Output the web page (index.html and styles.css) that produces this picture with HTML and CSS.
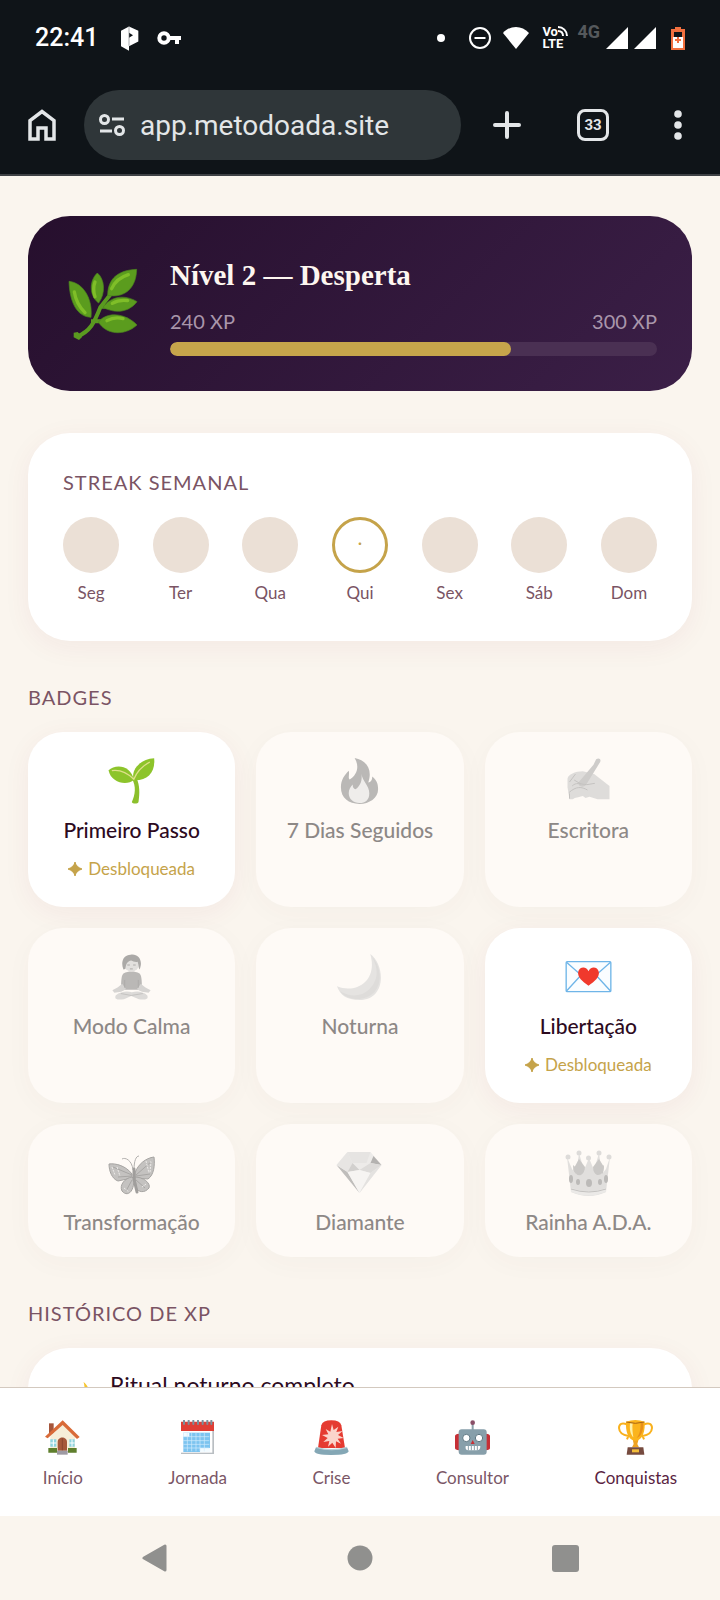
FILE: index.html
```html
<!DOCTYPE html>
<html lang="pt-BR">

<head>
    <meta charset="UTF-8">
    <meta name="viewport" content="width=device-width, initial-scale=1.0">
    <title>Conquistas</title>
    <link rel="stylesheet" href="styles.css">
</head>

<body>
    <!-- Status bar -->
    <div class="status-bar">
        <span class="clock">22:41</span>
        <svg class="status-app" width="18" height="25" viewBox="0 0 54 74">
            <path d="M0 14 24 1l28 13v32L24 60v14L0 60z" fill="#fff" />
            <path d="M24 20l12 7-12 8z" fill="#0f1418" />
            <path d="M24 1v58" stroke="#7d8184" stroke-width="2" />
        </svg>
        <svg width="24" height="14" viewBox="0 0 24 14">
            <circle cx="7" cy="7" r="4.7" fill="none" stroke="#fff" stroke-width="4" />
            <path d="M12 5h12v4h-2v4h-4V9h-6z" fill="#fff" />
        </svg>
        <div class="status-right">
            <span class="status-dot"></span>
            <svg width="24" height="24" viewBox="0 0 24 24" fill="none" stroke="#fff" stroke-width="2">
                <circle cx="12" cy="12" r="10" />
                <path d="M6.500 12h11" />
            </svg>
            <svg width="26" height="22" viewBox="0 0 26 22">
                <path d="M13 22 0 6C7-2 19-2 26 6z" fill="#fff" />
            </svg>
            <span class="volte">
                <span>Vo<svg width="10" height="10" viewBox="0 0 10 10" fill="none" stroke="#fff" stroke-width="2"><path d="M0 1c5 0 9 4 9 9M0 5c3 0 5 2 5 5" /></svg></span>
                <span>LTE</span>
            </span>
            <span class="net">4G</span>
            <svg class="signal" width="22" height="22" viewBox="0 0 22 22"><path d="M22 0v22H0z" fill="#fff" /></svg>
            <svg class="signal" width="22" height="22" viewBox="0 0 22 22"><path d="M22 0v22H0z" fill="#fff" /></svg>
            <svg class="battery" width="14" height="23" viewBox="0 0 14 23">
                <path d="M0 2h4V0h6v2h4v21H0z" fill="#f2703f" />
                <path d="M3 5h8v5H3z" fill="#101519" />
                <path d="M2 10h10v11H2z" fill="#fff" />
                <path d="M7 10v6M4 13h6" stroke="#f2703f" stroke-width="2" />
            </svg>
        </div>
    </div>

    <!-- Browser toolbar -->
    <header class="toolbar">
        <button type="button" class="home-btn" aria-label="Página inicial">
            <svg width="28" height="32" viewBox="0 0 28 32" fill="none" stroke="#e3e6e8" stroke-width="3.500">
                <path d="M2 30V11.500L14 2.500l12 9V30h-8V19h-8v11z" />
            </svg>
        </button>
        <div class="address">
            <svg width="26" height="22" viewBox="0 0 26 22" fill="none" stroke="#e3e6e8" stroke-width="3">
                <circle cx="5.500" cy="5.500" r="4" />
                <circle cx="20.500" cy="16.500" r="4" />
                <path d="M13 5h12M1 17h12" />
            </svg>
            <input type="text" class="address-input" value="app.metodoada.site" aria-label="Endereço do site">
        </div>
        <button type="button" class="tool-btn" aria-label="Nova guia">
            <svg width="28" height="28" viewBox="0 0 28 28" stroke="#e3e6e8" stroke-width="4" stroke-linecap="round">
                <path d="M14 2v24M2 14h24" />
            </svg>
        </button>
        <button type="button" class="tool-btn" aria-label="33 guias abertas"><span class="tabs">33</span></button>
        <button type="button" class="menu-btn" aria-label="Menu">
            <svg width="8" height="30" viewBox="0 0 8 30" fill="#e3e6e8">
                <circle cx="4" cy="4" r="3.800" />
                <circle cx="4" cy="15" r="3.800" />
                <circle cx="4" cy="26" r="3.800" />
            </svg>
        </button>
    </header>

    <main class="content">
        <section class="level-card">
            <div class="level-icon">
                <svg width="70" height="72" viewBox="0 0 208 216">
                    <path d="M26 206C66 190 78 164 96 118L134 70M68 160h40M98 116h26" fill="none" stroke="#5a9a20" stroke-width="12" />
                    <path d="M16 194l12-2 14 14-10 10-16-8z" fill="#5a9a20" />
                    <g fill="#5b9c1e" stroke="#4c8420" stroke-width="2">
                        <path d="M2 40C44 44 74 92 68 148 26 146 4 104 2 40z" />
                        <path d="M87 15c22 18 26 60 4 90-28-20-30-66-4-90z" />
                        <path d="M205 4c-1 52-32 88-87 78C118 32 150 6 205 4z" />
                        <path d="M104 118c26-36 68-38 102-17-28 36-70 34-102 17z" />
                        <path d="M90 162c26-32 80-28 116 9-38 34-92 30-116-9z" />
                    </g>
                    <g fill="none" stroke="#7fbe28" stroke-width="10" stroke-linecap="round">
                        <path d="M18 72c4 26 14 44 32 62" />
                        <path d="M80 42c-6 16-4 32 0 44" />
                        <path d="M180 20c-26 8-42 24-50 42" />
                        <path d="M132 106c14-8 30-10 46-8" />
                        <path d="M116 158c18-10 32-10 48-6" />
                    </g>
                </svg>
            </div>
            <div class="level-info">
                <h1 class="level-title">Nível 2 — Desperta</h1>
                <div class="level-xp"><span>240 XP</span><span>300 XP</span></div>
                <div class="bar">
                    <div class="bar-fill" style="width: 70%"></div>
                </div>
            </div>
        </section>

        <section class="streak-card">
            <h2 class="section-title">Streak semanal</h2>
            <div class="week">
                <div class="day"><span class="day-dot"></span>Seg</div>
                <div class="day"><span class="day-dot"></span>Ter</div>
                <div class="day"><span class="day-dot"></span>Qua</div>
                <div class="day"><span class="day-dot today">·</span>Qui</div>
                <div class="day"><span class="day-dot"></span>Sex</div>
                <div class="day"><span class="day-dot"></span>Sáb</div>
                <div class="day"><span class="day-dot"></span>Dom</div>
            </div>
        </section>

        <h2 class="section-title">Badges</h2>
        <div class="badges">
            <article class="badge">
                <svg class="badge-icon" viewBox="0 0 138 138">
                    <path d="M70 62c14 22 10 48 0 70 2 6 18 6 20 0 4-26 4-50-6-72z" fill="#8cc02c" />
                    <path d="M0 37C22 16 68 22 76 66 56 84 8 76 0 37z" fill="#8dc42b" />
                    <path d="M137 1c4 42-20 68-61 66C66 38 92 4 137 1z" fill="#8dc42b" />
                    <path d="M10 38c28-4 48 8 66 26C86 38 102 24 124 12" fill="none" stroke="#dfe08a" stroke-width="4" />
                </svg>
                <h3 class="badge-name">Primeiro Passo</h3>
                <p class="badge-tag"><svg width="14" height="14" viewBox="0 0 14 14"><path d="M7 0Q8 5 14 7 8 9 7 14 6 9 0 7 6 5 7 0z" fill="#c5a34a" stroke="#c5a34a" /></svg> Desbloqueada</p>
            </article>
            <article class="badge locked">
                <svg class="badge-icon" viewBox="0 0 46 47">
                    <path d="M18 0c14 3 18 13 14 25 3 0 4-3 4-6 5 4 6 8 6 13 0 9-9 15-19 15C12 47 4 41 4 30c0-8 4-13 8-17 1 4-1 7 1 9 8-5 10-14 5-22z" fill="#e8601c" />
                    <path d="M25 16c1 8 8 12 8 20 0 7-4 10-10 10S12 42 12 36c0-4 2-7 4-9 0 3 1 4 3 5 5-4 7-9 6-16z" fill="#ffe28c" />
                </svg>
                <h3 class="badge-name">7 Dias Seguidos</h3>
            </article>
            <article class="badge locked">
                <svg class="badge-icon" viewBox="0 0 138 138">
                    <path d="M6 62C8 50 28 40 52 40l34 8 46 36 0 40-36 0-24-8-12 4-8-6-14 4-10 2-6 4-10 0-6-36z" fill="#d6bda0" />
                    <path d="M92 4c8-6 16 0 12 8L62 80c-10 12-28 4-22-8L84 20z" fill="#a0a0a0" />
                    <path d="M26 66l20 12M20 84c12-12 22-6 44-4l24-4M10 104c22-20 38-18 56-8M30 48l-18 24M12 106v16" fill="none" stroke="#9c8a75" stroke-width="3" />
                </svg>
                <h3 class="badge-name">Escritora</h3>
            </article>

            <article class="badge locked">
                <svg class="badge-icon" viewBox="0 0 138 142">
                    <path d="M44 60c16-8 34-8 50 0 8 8 6 28 8 50H36c2-22 0-42 8-50z" fill="#787878" />
                    <path d="M40 92c-10 10-18 14-30 20l6 8c16-2 28-4 36-12zM98 92c10 10 18 14 30 20l-6 8c-16-2-28-4-36-12z" fill="#c8ac90" />
                    <path d="M20 128c16-14 38-14 50-10 14-4 34-4 48 10 4 12-6 14-26 12l-24-10-22 10c-22 2-30 0-26-12z" fill="#c9b9aa" />
                    <path d="M36 122l32 6 36-6" fill="none" stroke="#8a8a8a" stroke-width="3" />
                    <circle cx="69" cy="30" r="24" fill="#e3c4a4" />
                    <path d="M44 48C34 22 46 2 66 2c24-4 40 18 28 46-4-4-2-14-6-24-8 2-14-2-20-4-10 2-16 8-18 26z" fill="#5a5a5a" />
                    <path d="M56 34h8M74 34h8M64 46h9" stroke="#67574b" stroke-width="3" />
                    <path d="M48 80l0 24M90 80l0 24" stroke="#5f5f5f" stroke-width="3" />
                </svg>
                <h3 class="badge-name">Modo Calma</h3>
            </article>
            <article class="badge locked">
                <svg class="badge-icon" viewBox="0 0 46 47">
                    <path d="M34 0c16 12 16 47-11 47C10 47 3 42 0 33c20 8 42-6 34-33z" fill="#d2ccc4" />
                    <path d="M36 3c13 15 10 41-13 43-10 0-16-3-20-8 10 6 22 6 30-2 9-9 10-20 3-33z" fill="#c4beb8" />
                </svg>
                <h3 class="badge-name">Noturna</h3>
            </article>
            <article class="badge">
                <svg class="badge-icon" viewBox="0 0 138 138">
                    <rect x="2" y="23" width="134" height="90" rx="3" fill="#fafdff" stroke="#6fb5e8" stroke-width="4" />
                    <path d="M3 25l66 58 66-58M3 111l44-48M135 111 91 63" fill="none" stroke="#6fb5e8" stroke-width="4" />
                    <path d="M69 95C50 82 36 70 38 54c4-18 26-17 31-2 5-15 27-16 31 2 2 16-12 28-31 41z" fill="#f0392c" />
                </svg>
                <h3 class="badge-name">Libertação</h3>
                <p class="badge-tag"><svg width="14" height="14" viewBox="0 0 14 14"><path d="M7 0Q8 5 14 7 8 9 7 14 6 9 0 7 6 5 7 0z" fill="#c5a34a" stroke="#c5a34a" /></svg> Desbloqueada</p>
            </article>

            <article class="badge locked">
                <svg class="badge-icon" viewBox="0 0 47 46">
                    <path d="M25 20C24 10 17 7 14 9M26 20c0-9 2-14 5-14" fill="none" stroke="#666" />
                    <g fill="#8c8c8c" stroke="#4d4d4d" stroke-width="1">
                        <path d="M24 24C18 16 8 13 1 14c0 7 3 15 9 17l14-3z" />
                        <path d="M27 23C30 14 38 8 46 7c1 8 0 18-6 22l-13-1z" />
                        <path d="M24 27c-7 1-13 8-10 14 5 6 12 2 12-12z" />
                        <path d="M27 27c8 0 16 6 14 11-4 5-11 5-13-1z" />
                    </g>
                    <path d="M24 25 5 17M24 26l-14 1M28 25 44 11M28 26l14-2M24 30l-6 11M28 30l9 8" stroke="#555" />
                    <path d="M4 17l3 8M9 17l3 9M38 11l3 12M43 11l-1 12M16 38l5 4M34 37l4-3" stroke="#ddd" stroke-dasharray="2 1" />
                    <path d="M26 19v10l3 13" fill="none" stroke="#444" stroke-width="3" stroke-linecap="round" />
                </svg>
                <h3 class="badge-name">Transformação</h3>
            </article>
            <article class="badge locked">
                <svg class="badge-icon" viewBox="0 0 46 46">
                    <path d="M11 2h23l11 13-22 28L0 15z" fill="#dedede" />
                    <path d="M11 2h23l-4 11-14 0z" fill="#cfcfcf" />
                    <path d="M0 15l11 7 12 21z" fill="#828282" />
                    <path d="M0 15 11 2l5 11-5 9z" fill="#d2d2d2" />
                    <path d="M16 13l7 7-12 2z" fill="#a8a8a8" />
                    <path d="M37 6l8 9-11-2z" fill="#6c6c6c" />
                    <path d="M23 20l11-7 11 2-11 8z" fill="#bdbdbd" />
                    <path d="M11 22l12-2 11 3-11 20z" fill="#f0f0f0" />
                    <path d="M34 23l11-8-22 28z" fill="#cbcbcb" />
                </svg>
                <h3 class="badge-name">Diamante</h3>
            </article>
            <article class="badge locked">
                <svg class="badge-icon" viewBox="0 0 47 46">
                    <path d="M8 15l8 7 7-7 8 7 8-7-2 20-14 4-14-4z" fill="#9a9a9a" />
                    <path d="M2 7l5 12 4 5 3-21 5 17 5-12 5 12 5-17 3 21 4-5 4-12-4 35q-17 8-35 0z" fill="#c6c6c6" />
                    <path d="M9 18q2 9 7 7 4-3 4-8l-6-8zM28 17q0 6 4 8 6 1 7-8l-5-8z" fill="#989898" />
                    <g fill="#bdbdbd">
                        <circle cx="3" cy="7" r="2.500" />
                        <circle cx="14" cy="3" r="2.500" />
                        <circle cx="23.500" cy="8" r="2.500" />
                        <circle cx="34" cy="3" r="2.500" />
                        <circle cx="44" cy="7" r="2.500" />
                    </g>
                    <g fill="#7c7c7c">
                        <ellipse cx="6" cy="29" rx="2" ry="4" />
                        <ellipse cx="13" cy="32" rx="2" ry="3" />
                        <ellipse cx="24" cy="33" rx="3" ry="4" />
                        <ellipse cx="35" cy="32" rx="2" ry="3" />
                        <ellipse cx="41" cy="29" rx="2" ry="4" />
                    </g>
                    <path d="M6 38q18 7 35 0v4q-18 7-35 0z" fill="#dadada" />
                    <path d="M6 39q18 6 35 0" fill="none" stroke="#8c8c8c" />
                </svg>
                <h3 class="badge-name">Rainha A.D.A.</h3>
            </article>
        </div>

        <h2 class="section-title">Histórico de XP</h2>
        <section class="history">
            <div class="history-row">
                <svg class="history-icon" viewBox="0 0 46 47">
                    <path d="M34 0c16 12 16 47-11 47C10 47 3 42 0 33c20 8 42-6 34-33z" fill="#f7c52d" />
                </svg>
                <span>Ritual noturno completo</span>
            </div>
        </section>
    </main>

    <nav class="bottom-nav">
        <a href="#inicio" class="nav-link">
            <svg class="nav-icon" viewBox="0 0 105 105">
                <path d="M12 10h14v30H12z" fill="#a5553a" />
                <path d="M16 48 54 12l36 38v46H16z" fill="#f6eed8" />
                <path d="M0 50 53 1l51 50-8 6-43-42L8 55z" fill="#d96b38" />
                <path d="M16 58h18v22H16zM73 58h16v22H73z" fill="#8fd4de" />
                <path d="M25 58v22M81 58v22M16 69h18M73 69h16" stroke="#fff" stroke-width="3" />
                <path d="M38 92V66c0-18 28-18 28 0v26z" fill="#a6583a" />
                <path d="M52 55v37" stroke="#7c3d28" stroke-width="2" />
                <path d="M10 84h26v14H10zM69 84h26v14H69z" fill="#5f7f2d" />
                <path d="M36 92h32v12H36z" fill="#9e9aa3" />
            </svg>
            Início
        </a>
        <a href="#jornada" class="nav-link">
            <svg class="nav-icon" viewBox="0 0 105 105">
                <path d="M3 12h99v90H3z" fill="#b9bec2" />
                <path d="M3 12h94v86H3z" fill="#fff" />
                <path d="M3 5h99v28H3z" fill="#df3e35" />
                <path d="M10 38h80v58H10z" fill="#7cc4f0" />
                <path d="M10 38h18v12H10zM60 84h30v12H60z" fill="#f3fbff" />
                <path d="M22 38v56M35 38v56M48 38v56M60 38v56M73 38v56M10 50h78M10 62h78M10 73h78M10 84h78" stroke="#d3edfd" stroke-width="2" />
                <path d="M12 2v10M26 2v10M40 2v10M54 2v10M68 2v10M82 2v10M94 2v10" stroke="#79909b" stroke-width="6" stroke-linecap="round" />
            </svg>
            Jornada
        </a>
        <a href="#crise" class="nav-link">
            <svg class="nav-icon" viewBox="0 0 105 105">
                <path d="M12 84 22 16Q26 1 52 1t30 15l11 68z" fill="#e53b31" />
                <path d="M54 12l5 18 14-10-6 16 19-3-14 12 17 9-18 2 10 15-15-7-1 20-10-16-13 12 4-17-18 3 13-12-17-9 19-2-8-16 14 8z" fill="#fbd4cb" />
                <path d="M6 82q46 16 93 0l5 12q-2 11-52 11T1 94z" fill="#84a7b5" />
                <path d="M7 82q46 14 92 0" fill="none" stroke="#b9d0d8" stroke-width="4" />
            </svg>
            Crise
        </a>
        <a href="#consultor" class="nav-link">
            <svg class="nav-icon" viewBox="0 0 105 105">
                <path d="M53 10v20" stroke="#8ba0a9" stroke-width="6" />
                <circle cx="53" cy="8" r="7" fill="#8a4f67" />
                <path d="M0 48q0-6 12-7v50Q0 90 0 84zM105 48q0-6-12-7v50q12-1 12-7z" fill="#c62f36" />
                <rect x="11" y="28" width="84" height="76" rx="9" fill="#879faa" />
                <g fill="#fff" stroke="#5f7883" stroke-width="3">
                    <circle cx="34" cy="54" r="11" />
                    <circle cx="72" cy="54" r="11" />
                </g>
                <path d="M53 60l6 12H47z" fill="#c62f36" />
                <path d="M32 78h44q0 13-10 13H40q-10 0-8-13z" fill="#fff" />
                <path d="M40 77v14M49 77v14M58 77v14M67 77v14" stroke="#879faa" stroke-width="3" />
            </svg>
            Consultor
        </a>
        <a href="#conquistas" class="nav-link active" aria-current="page">
            <svg class="nav-icon" viewBox="0 0 105 105">
                <path d="M28 14C12 6 3 12 3 24c1 16 16 22 28 24l-4 10M77 14c16-8 25-2 25 10-1 16-16 22-28 24l4 10" fill="none" stroke="#f9b11c" stroke-width="6" />
                <path d="M44 58h18l-4 14 5 10H42l5-10z" fill="#eea221" />
                <path d="M24 5q28-10 56 0c2 36-10 57-28 57S22 40 24 5z" fill="#fbb41d" />
                <path d="M36 10c-2 20 2 34 10 42-2-14-4-28-2-42z" fill="#fff0a8" />
                <path d="M68 8c0 22-4 36-12 46 16-6 21-28 20-46z" fill="#e8901b" />
                <path d="M25 6q27 8 54 0" fill="none" stroke="#a86416" stroke-width="3" />
                <path d="M29 82h47l3 22H26z" fill="#764b3f" />
                <path d="M42 88h21v9H42z" fill="#f3bd3a" />
            </svg>
            Conquistas
        </a>
    </nav>

    <!-- System navigation -->
    <div class="system-nav">
        <button type="button" class="system-btn" aria-label="Voltar">
            <svg width="26" height="28" viewBox="0 0 26 28"><path d="M2 14 23 2v24z" fill="#90908e" stroke="#90908e" stroke-width="3" stroke-linejoin="round" /></svg>
        </button>
        <button type="button" class="system-btn" aria-label="Início do sistema">
            <svg width="26" height="26" viewBox="0 0 26 26"><circle cx="13" cy="13" r="12.500" fill="#90908e" /></svg>
        </button>
        <button type="button" class="system-btn" aria-label="Recentes">
            <svg width="27" height="27" viewBox="0 0 27 27"><rect width="27" height="27" rx="3" fill="#90908e" /></svg>
        </button>
    </div>
</body>

</html>
```

FILE: styles.css
```css
* {
    margin: 0;
    padding: 0;
    box-sizing: border-box;
}

body {
    height: 100vh;
    display: flex;
    flex-direction: column;
    overflow: hidden;
    font-family: 'Lato', sans-serif;
    background: #faf5ee;
    color: #2d0a1e;
}

svg {
    display: block;
    flex-shrink: 0;
}

button {
    border: none;
    background: none;
    cursor: pointer;
}

/* Status bar */
.status-bar {
    height: 76px;
    flex-shrink: 0;
    display: flex;
    align-items: center;
    padding: 0 35px;
    background: #0f1418;
    color: #fff;
    font-family: 'Roboto', sans-serif;
}

.clock {
    font-size: 25px;
    font-weight: 500;
    line-height: 32px;
}

.status-app {
    margin: 0 18px 0 23px;
}

.status-right {
    margin-left: auto;
    display: flex;
    align-items: center;
}

.status-dot {
    width: 8px;
    height: 8px;
    margin-right: 23px;
    border-radius: 50%;
    background: #fff;
}

.status-right svg + svg {
    margin-left: 11px;
}

.volte {
    width: 27px;
    margin: 0 8px 0 13px;
    font-size: 13px;
    font-weight: 700;
    line-height: 12px;
}

.volte span {
    display: flex;
}

.net {
    height: 28px;
    margin-right: 6px;
    font-size: 18px;
    font-weight: 700;
    line-height: 16px;
    color: #55595c;
}

.status-right .signal + .signal {
    margin-left: 6px;
}

.status-right .battery {
    margin-left: 15px;
}

/* Browser toolbar */
.toolbar {
    height: 100px;
    flex-shrink: 0;
    display: flex;
    align-items: center;
    border-bottom: 2px solid #3e4145;
    background: #0f1418;
}

.home-btn {
    padding: 0 28px;
}

.address {
    flex: 1;
    min-width: 0;
    height: 70px;
    margin-right: 3px;
    padding: 0 15px;
    display: flex;
    align-items: center;
    gap: 15px;
    border-radius: 35px;
    background: #2f3639;
}

.address-input {
    width: 100%;
    min-width: 0;
    border: none;
    outline: none;
    background: none;
    font-family: 'Roboto', sans-serif;
    font-size: 28px;
    color: #e3e6e8;
}

.tool-btn {
    width: 86px;
    display: flex;
    justify-content: center;
}

.menu-btn {
    width: 84px;
    display: flex;
    justify-content: center;
}

.tabs {
    width: 32px;
    height: 32px;
    border: 3px solid #e3e6e8;
    border-radius: 8px;
    font-family: 'Roboto', sans-serif;
    font-size: 15px;
    font-weight: 700;
    line-height: 26px;
    color: #e3e6e8;
}

/* Content */
.content {
    flex: 1;
    min-height: 0;
    overflow: hidden;
    padding: 40px 28px 0;
}

.level-card {
    display: flex;
    align-items: center;
    gap: 28px;
    padding: 35px;
    margin-bottom: 42px;
    border-radius: 42px;
    background: linear-gradient(135deg, #260f2d, #3b1f47);
}

.level-icon {
    width: 79px;
    display: flex;
    justify-content: center;
}

.level-info {
    flex: 1;
}

.level-title {
    padding-top: 3px;
    margin-bottom: 11px;
    font-family: 'Liberation Serif', serif;
    font-size: 29px;
    font-weight: 700;
    line-height: 42px;
    color: #fdf6f0;
}

.level-xp {
    display: flex;
    justify-content: space-between;
    font-size: 20px;
    line-height: 28px;
    color: #a996ab;
}

.bar {
    height: 14px;
    margin-top: 7px;
    border-radius: 7px;
    overflow: hidden;
    background: #4a3053;
}

.bar-fill {
    height: 100%;
    border-radius: 7px;
    background: #c6a54b;
}

.streak-card {
    margin-bottom: 42px;
    padding: 35px;
    border-radius: 42px;
    background: #fff;
    box-shadow: 0 6px 28px rgba(140, 40, 60, 0.06);
}

.section-title {
    margin-bottom: 21px;
    font-size: 20px;
    font-weight: 400;
    line-height: 28px;
    letter-spacing: 1px;
    text-transform: uppercase;
    color: #7a5464;
}

.week {
    display: flex;
    justify-content: space-between;
}

.day {
    width: 56px;
    font-size: 17px;
    line-height: 26px;
    text-align: center;
    color: #7a5464;
}

.day-dot {
    display: block;
    height: 56px;
    margin-bottom: 7px;
    border-radius: 50%;
    background: #ebe0d6;
}

.day-dot.today {
    border: 3px solid #c5a34a;
    background: #fff;
    color: #c5a34a;
    line-height: 46px;
}

.badges {
    display: grid;
    grid-template-columns: repeat(3, 1fr);
    gap: 21px;
    margin-bottom: 42px;
}

.badge {
    padding: 26px 10px 20px;
    border-radius: 35px;
    background: #fff;
    text-align: center;
    box-shadow: 0 6px 28px rgba(140, 40, 60, 0.06);
}

.badge.locked {
    background: #fefaf6;
    color: #8d8886;
    box-shadow: 0 6px 28px rgba(80, 70, 50, 0.03);
}

.badge-icon {
    width: 47px;
    height: 46px;
    margin: 0 auto 11px;
}

.locked .badge-icon {
    opacity: 0.5;
    filter: grayscale(1);
}

.badge-name {
    font-size: 21px;
    font-weight: 500;
    line-height: 30px;
}

.badge-tag {
    display: flex;
    align-items: center;
    justify-content: center;
    gap: 6px;
    margin: 9px 0 3px;
    font-size: 17px;
    line-height: 30px;
    color: #c5a34a;
}

.history {
    padding: 20px 35px;
    border-radius: 42px;
    background: #fff;
    box-shadow: 0 6px 28px rgba(140, 40, 60, 0.06);
}

.history-row {
    display: flex;
    gap: 19px;
    font-size: 23px;
    line-height: 34px;
}

.history-icon {
    width: 28px;
    height: 28px;
    margin-top: 14px;
}

/* Bottom navigation */
.bottom-nav {
    flex-shrink: 0;
    display: flex;
    justify-content: space-around;
    padding: 32px 0 25px;
    border-top: 1px solid #d3c9bf;
    background: #fff;
}

.nav-link {
    font-size: 17px;
    line-height: 26px;
    text-align: center;
    text-decoration: none;
    color: #7a5666;
}

.nav-link.active {
    color: #5a1f42;
}

.nav-icon {
    width: 35px;
    height: 35px;
    margin: 0 auto 10px;
}

/* System navigation */
.system-nav {
    height: 84px;
    flex-shrink: 0;
    display: grid;
    grid-template-columns: repeat(3, 1fr);
    padding: 0 52px;
}

.system-btn {
    display: flex;
    align-items: center;
    justify-content: center;
}
```
